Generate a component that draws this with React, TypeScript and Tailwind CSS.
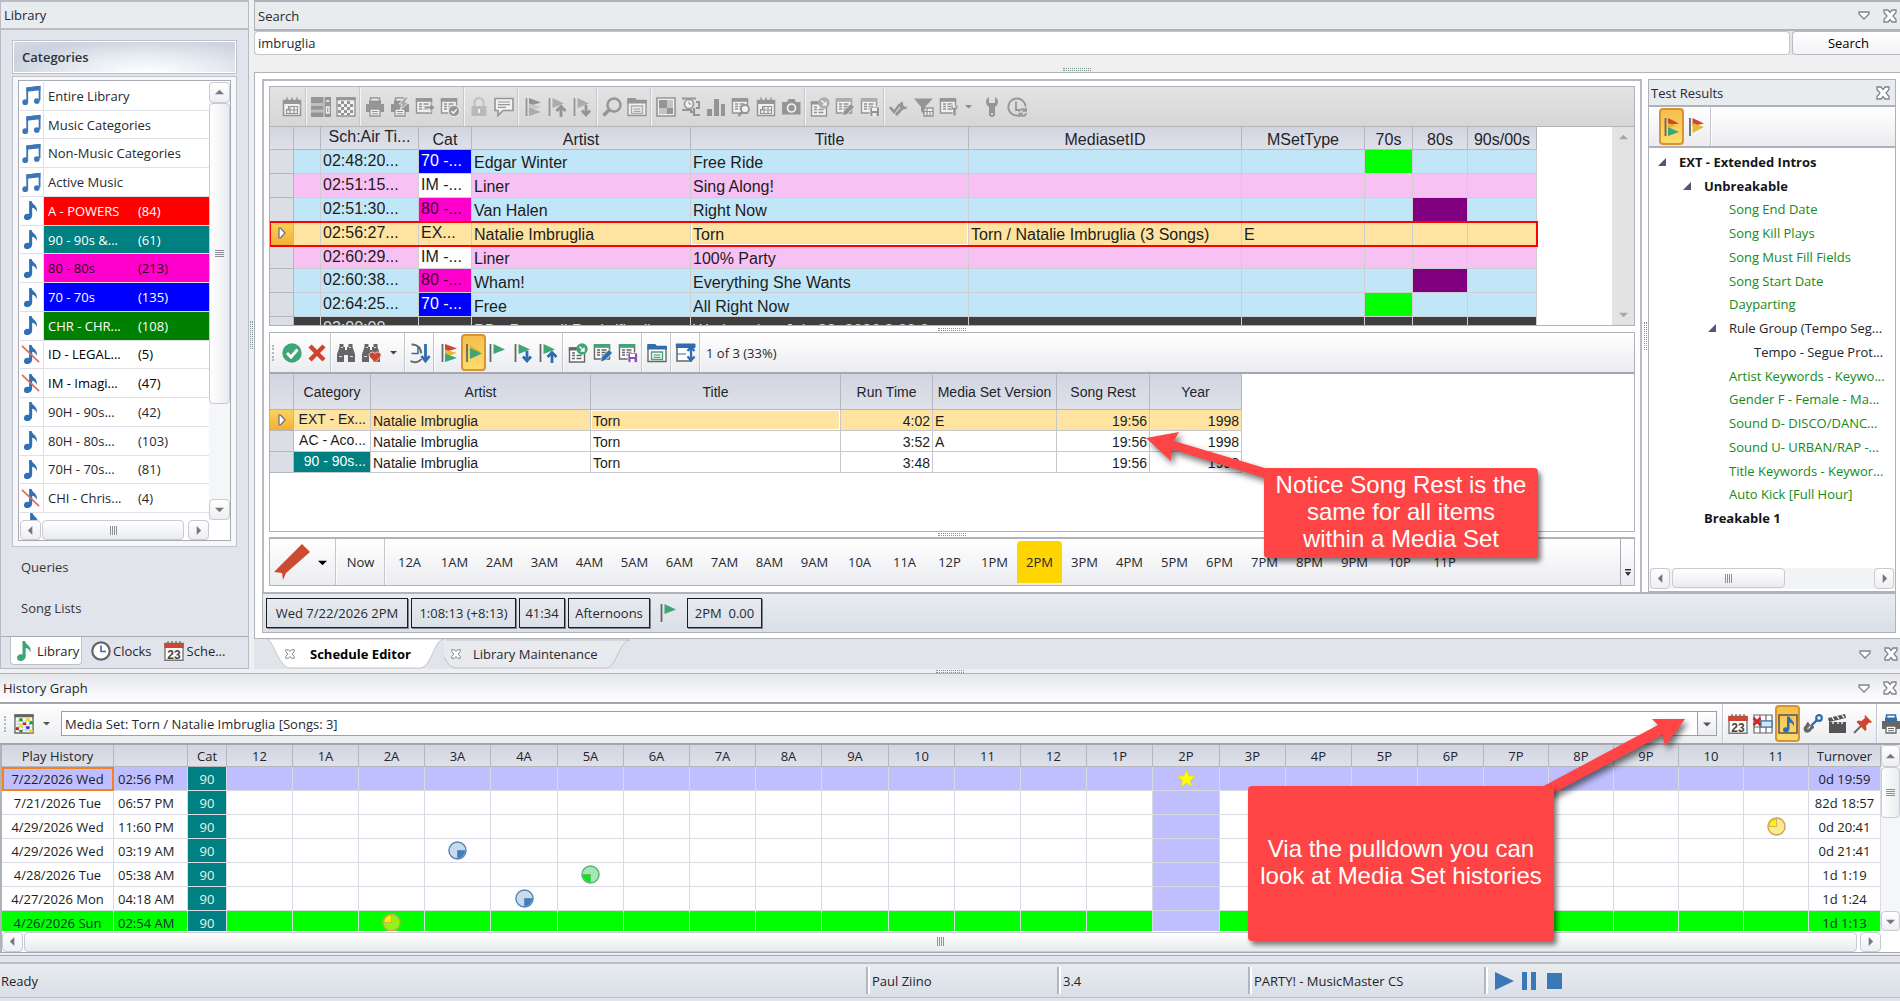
import React, { useState } from 'react';
import clsx from 'clsx';

const GRAY = '#666666';
const BLUE = '#2f6db0';
const GREEN = '#3fa577';
const RED = '#cf4530';
const YELLOW = '#e3b92f';

/* ---------- icons ---------- */

const TableBase = ({ head = GREEN }: { head?: string }) => (
  <>
    <path d="M1.5 2h15v14h-15z" fill="#fff" stroke={GRAY} strokeWidth="1.4" />
    <path d="M.8 1.2h16.4v3.6H.8z" fill={head} />
    <path d="M4 7h3M4 9.5h3M4 12h3M8.5 7h5M8.5 9.5h5M8.5 12h5" stroke={GRAY} strokeWidth="1.3" />
  </>
);

const FlagBase = () => (
  <>
    <path d="M1.5 1v18" stroke={GRAY} strokeWidth="1.8" />
    <path d="M4.5 1 16 6.5 4.5 11z" fill={GREEN} />
  </>
);

const PrinterBase = () => (
  <>
    <path d="M5.5 1h9v5h-9z" fill="#fff" stroke={BLUE} strokeWidth="1.5" />
    <path d="M4 3.5h12v4H4z" fill={BLUE} />
    <path d="M1 7h18v8H1z" fill={GRAY} />
    <path d="M5 12h10v7H5z" fill="#fff" stroke={GRAY} strokeWidth="1.3" />
    <path d="M7 14.5h6M7 16.7h6" stroke={GRAY} />
  </>
);

const Binoculars = () => (
  <>
    <path d="M3.500 1h4v3h1.500v3h2V4h1.500V1h4v3L19 11v8h-7v-7H8v7H1v-8l2.500-7z" fill={GRAY} />
    <path d="M3 13.500h3M14 13.500h3M5 4.500h2M13 4.500h2" stroke="#fff" strokeWidth=".8" />
  </>
);

const NOTE_PATH = 'M7.500 0h2.500c.8 4 7 5 5.500 11.500-.9-3-2.800-4.300-4.800-4.500V15c0 6-8.700 6.500-8.700 2 0-3.200 3-4.200 5.500-3.400z';

const ICONS: Record<string, React.ReactNode> = {
  calendar: (
    <>
      <path d="M1.5 3.5h17v15h-17z" fill="#fff" stroke={GRAY} strokeWidth="1.5" />
      <path d="M1 3h18v4H1z" fill={GRAY} />
      <path d="M5 .5v4M10 .5v4M15 .5v4" stroke={GRAY} strokeWidth="1.5" />
      <path d="M6.5 9.500h9v7h-11v-4h2zM4.500 13h11M8 9.500v7M12 9.500v7" fill="none" stroke={GRAY} strokeWidth="1.1" />
    </>
  ),
  layout: (
    <>
      <path d="M0 0h12.500v20H0zM13.500 0H20v20h-6.500z" fill={GRAY} />
      <path d="M0 6h12.500v3H0zM0 12.500h12.500v3H0z" fill="#aaa" />
      <path d="M15 4h3.500M15.500 10h2.500v6h-2.500z" stroke="#fff" fill="none" strokeWidth="1.4" />
    </>
  ),
  cells: (
    <>
      <path d="M1 1h18v18H1z" fill="#fff" stroke={GRAY} strokeWidth="1.4" />
      <path d="M.3 .3h19.4v3H.3z" fill={GRAY} />
      <path d="M5 4h3v3H5zM11 4h3v3h-3zM2 7h3v3H2zM8 7h3v3H8zM14 7h3v3h-3zM5 10h3v3H5zM11 10h3v3h-3zM2 13h3v3H2zM8 13h3v3H8zM14 13h3v3h-3zM5 16h3v2H5zM11 16h3v2h-3z" fill={GRAY} />
    </>
  ),
  colorCells: (
    <>
      <path d="M1 1h18v18H1z" fill="#fff" stroke={GRAY} strokeWidth="1.4" />
      <path d="M.3 .3h19.4v3H.3z" fill={GRAY} />
      <path d="M5 4v15M8.500 4v15M12 4v15M15.500 4v15M1 7h18M1 10h18M1 13h18M1 16h18" stroke="#b9bcc4" strokeWidth=".8" />
      <path d="M5.400 4.300h3v3h-3zM15.800 7.300h3v3h-3zM5.400 16h3v2.600h-3z" fill="#12a512" />
      <path d="M9 8.500h3v2.600H9zM1.800 13.300h3v2.600h-3z" fill="#d31818" />
      <path d="M12.300 12.300h3v2.600h-3z" fill="#2424d8" />
      <path d="M12.300 4.300h3v2.600h-3zM5.400 10.300h3v2.600h-3zM15.800 16h3v2.600h-3z" fill="#f0e010" />
    </>
  ),
  printer: <PrinterBase />,
  printerBolt: (
    <>
      <PrinterBase />
      <path d="M15 0 9 7h3l-2 6 9-8h-4l4-5z" fill="#888" stroke="#fff" strokeWidth=".8" />
    </>
  ),
  tableArrow: (
    <>
      <TableBase head={GRAY} />
      <path d="M9 9h6V5.500l5 5-5 5V12H9z" fill={GRAY} stroke="#fff" strokeWidth=".8" />
    </>
  ),
  tableCheck: (
    <>
      <TableBase head={GRAY} />
      <circle cx="14" cy="14" r="5.600" fill={GRAY} stroke="#fff" />
      <path d="m11.300 14 2 2.200 3.500-4" stroke="#fff" strokeWidth="1.600" fill="none" />
    </>
  ),
  lock: (
    <>
      <path d="M5.500 9V5.500a4.500 4.500 0 0 1 9 0V9" fill="none" stroke="#aaa" strokeWidth="2" />
      <path d="M2.500 9h15v10h-15z" fill="#a4a4a4" />
      <path d="M10 12v4" stroke="#fff" strokeWidth="2" />
    </>
  ),
  comment: (
    <>
      <path d="M1 1.500h18v12H9l-5 5v-5H1z" fill="#fff" stroke={GRAY} strokeWidth="1.600" />
      <path d="M4 5h12M4 7.700h12M4 10.400h8" stroke={GRAY} strokeWidth="1.200" />
    </>
  ),
  flags: (
    <>
      <path d="M3.500 1v18" stroke={GRAY} strokeWidth="1.800" />
      <path d="M6 1 18 5.500 6 9z" fill={RED} />
      <path d="M6 6.500 18 10 6 14z" fill={YELLOW} />
      <path d="M6 10.500 18 15 6 19z" fill={GREEN} />
    </>
  ),
  flagsTwo: (
    <>
      <path d="M3.500 1v18" stroke={GRAY} strokeWidth="1.800" />
      <path d="M6 1 17 6.500 6 8z" fill={RED} />
      <path d="M6 6 14 9 6 11z" fill={YELLOW} />
      <path d="M6 10 17 15 6 19z" fill={GREEN} />
    </>
  ),
  flagsWarn: (
    <>
      <path d="M3 1v18" stroke={GRAY} strokeWidth="1.800" />
      <path d="M5.500 1 17 6.500 5.500 9z" fill={RED} />
      <path d="M5.500 6 17 10 5.500 16z" fill={YELLOW} />
    </>
  ),
  flagCurrent: (
    <>
      <path d="M3 1v18" stroke={GRAY} strokeWidth="1.800" />
      <path d="M6 2 17 9 6 9z" fill="#dcb531" />
      <path d="M6 5 18 10.500 6 16z" fill={GREEN} />
    </>
  ),
  flag: <FlagBase />,
  flagDown: (
    <>
      <FlagBase />
      <path d="M9 13.500 13 18l4-4.500M13 8v9.500" stroke={BLUE} strokeWidth="2.800" fill="none" />
    </>
  ),
  flagUp: (
    <>
      <FlagBase />
      <path d="M8.500 14 13 9.500l4.500 4.500M13 10v10" stroke={BLUE} strokeWidth="2.800" fill="none" />
    </>
  ),
  search: (
    <>
      <circle cx="12" cy="8" r="6.500" fill="none" stroke={GRAY} strokeWidth="2.400" />
      <path d="m7.500 12.500-6 6" stroke={GRAY} strokeWidth="3.400" />
    </>
  ),
  folder: (
    <>
      <path d="M1 3.500h18v15H1z" fill="#fff" stroke={GRAY} strokeWidth="1.400" />
      <path d="M.3 1h8l1.500 2h10v3.500H.3z" fill={BLUE} />
      <path d="M4.500 9h11v7.500h-11z" fill="#fff" stroke={GREEN} strokeWidth="1.400" />
      <path d="M6.500 12h7M6.500 14.300h7" stroke={GRAY} />
    </>
  ),
  quad: (
    <>
      <path d="M1 1h18v18H1z" fill="#fff" stroke={GRAY} strokeWidth="1.600" />
      <path d="M3 3h8v8H3z" fill={GRAY} />
      <path d="M11 3h6v8h-6zM3 11h8v6H3z" fill="#b5b5b5" />
      <path d="M11 11h6v6h-6z" fill={GRAY} />
    </>
  ),
  clockTree: (
    <>
      <path d="M1 1.500h14M1 13h10M15 5h3v6h-3" stroke={GRAY} strokeWidth="2" fill="none" />
      <circle cx="8" cy="7" r="4.500" fill="#fff" stroke={GRAY} strokeWidth="1.600" />
      <path d="M8 4.500V7h2.500" stroke={GRAY} fill="none" />
      <path d="M13 11v7h6M9 15h4" stroke={GRAY} strokeWidth="2.200" fill="none" />
    </>
  ),
  bars: <path d="M1 12h5v7H1zM8 2h5v17H8zM15 7h4v12h-4z" fill={GRAY} />,
  tableSearch: (
    <>
      <TableBase head={GRAY} />
      <circle cx="14" cy="12" r="4" fill="#fff" stroke={GRAY} strokeWidth="1.800" />
      <path d="m11 15-3.500 4" stroke={GRAY} strokeWidth="2.400" />
    </>
  ),
  camera: (
    <>
      <path d="M1 5h5l1.500-3h6L15 5h4.500v12.500H1z" fill={GRAY} />
      <circle cx="10.500" cy="11" r="4" fill={GRAY} stroke="#fff" strokeWidth="1.700" />
    </>
  ),
  tableDisc: (
    <>
      <path d="M1.500 5h15v14h-15z" fill="#fff" stroke={GRAY} strokeWidth="1.400" />
      <path d="M.8 4.500h8v3h-8z" fill={GRAY} />
      <path d="M4 10h3M4 12.500h3M4 15.500h3M8.500 12.500h5M8.500 15.500h5" stroke={GRAY} strokeWidth="1.300" />
      <circle cx="14" cy="6" r="5.700" fill={GREEN} />
      <path d="m11.500 3.500 4 4M16 4.500v3.500h-3.500" stroke="#fff" strokeWidth="1.400" fill="none" />
    </>
  ),
  tableEdit: (
    <>
      <TableBase />
      <path d="m7.500 19 1-5L16 6.500l3.500 3.500-7.500 7.500z" fill={BLUE} stroke="#fff" strokeWidth=".7" />
    </>
  ),
  tableSave: (
    <>
      <TableBase />
      <path d="M10 10h9.500v9.500H10z" fill="#8a50b5" stroke="#fff" strokeWidth=".7" />
      <path d="M12 11h5v3h-5zM12.500 16h4v3h-4z" fill="#fff" />
    </>
  ),
  checks: (
    <>
      <path d="m1 10 4 5 6-8" stroke={GRAY} strokeWidth="2.600" fill="none" />
      <path d="m7 18 8-9" stroke={GRAY} strokeWidth="3" />
      <path d="M14 4.500a4 4 0 1 0 4.500 5l-3 .5-1.500-2z" fill={GRAY} />
    </>
  ),
  filterTable: (
    <>
      <path d="M0 1.500h19L11 10v8L7 14v-4z" fill={GRAY} />
      <path d="M10 11h9v8h-9z" fill="#fff" stroke={GRAY} strokeWidth="1.400" />
      <path d="M10 14.500h9M13 11v8M16 14v5" stroke={GRAY} strokeWidth="1.200" />
    </>
  ),
  tableWrench: (
    <>
      <TableBase head={GRAY} />
      <path d="M12 7v4l2 2v6h3v-6l2-2V7l-2 1.500v2h-3v-2z" fill={GRAY} stroke="#fff" strokeWidth=".6" />
    </>
  ),
  wrench: (
    <>
      <path d="M7 0C3 2 3 8 7 10v8c0 2.500 6 2.500 6 0v-8c4-2 4-8 0-10v6H7z" fill={GRAY} />
      <circle cx="10" cy="17" r="1" fill="#fff" />
    </>
  ),
  clockRefresh: (
    <>
      <path d="M18.500 9.500a8.600 8.600 0 1 0-7 9" fill="none" stroke={GRAY} strokeWidth="1.900" />
      <path d="M9 4.500V13h3" stroke={GRAY} strokeWidth="1.800" fill="none" />
      <path d="M12 14.500c1-3 5-3 6.500-1M19 10.500V14h-3.500M19.500 16c-1 3.500-5 3.500-6.500 1.500M12.500 20v-3.500H16" stroke={GRAY} strokeWidth="1.700" fill="none" />
    </>
  ),
  ok: (
    <>
      <circle cx="10" cy="10" r="9.700" fill={GREEN} />
      <path d="m5 10 4 4 6.500-7.500" stroke="#fff" strokeWidth="3" fill="none" />
    </>
  ),
  cancel: <path d="m3 3 14 14M17 3 3 17" stroke={RED} strokeWidth="4.400" />,
  binoculars: <Binoculars />,
  binocularsHeart: (
    <>
      <Binoculars />
      <path d="M14 19.500 8.500 14a3 3 0 0 1 5.500-3.500A3 3 0 0 1 19.500 14z" fill={RED} stroke="#fff" strokeWidth=".7" />
    </>
  ),
  clockDown: (
    <>
      <path d="M1.500 1.500a8.500 8.500 0 0 1 9.500 9M.5 18a8.500 8.500 0 0 0 11-2" fill="none" stroke={GRAY} strokeWidth="1.900" />
      <path d="M8 4v6.500H1.500" stroke={BLUE} strokeWidth="1.500" fill="none" />
      <path d="M15.500 1v16M11.500 13l4 5 4-5" stroke={BLUE} strokeWidth="2.800" fill="none" />
    </>
  ),
  split: (
    <>
      <path d="M1 2h14v16H1z" fill="#fff" stroke={GRAY} strokeWidth="1.500" />
      <path d="M.3 1H19v3.500H.3zM1 11h9" fill={BLUE} stroke={BLUE} />
      <path d="M15 4v13M11.500 8 15 4l3.500 4M11.500 13.500l3.500 4 3.500-4" stroke={BLUE} strokeWidth="2.300" fill="none" />
    </>
  ),
  gridX: (
    <>
      <path d="M1 1h18v18H1zM7 1v18M13 1v18M1 7h18M1 13h18" fill="#fff" stroke={GRAY} strokeWidth="1.200" />
      <path d="M8 7h11v6H8z" fill="#cfe5f8" stroke={BLUE} strokeWidth="1.200" />
      <path d="m.5 4 7 7M7.500 4l-7 7" stroke="#d1232a" strokeWidth="2.600" />
    </>
  ),
  noteBox: (
    <>
      <path d="M1 1h18v18H1z" fill="none" stroke="#555" strokeWidth="1.500" />
      <path d="M9 2.500h2.500c.5 3 5.500 4 4.500 10-1-3-3-4-4.500-4v6c0 5-6.500 5-6.500 1.500 0-2.500 2-3 4-2.500z" fill={BLUE} />
    </>
  ),
  guitar: (
    <>
      <path d="m8 12 7-7" stroke={BLUE} strokeWidth="2.400" />
      <circle cx="16" cy="4" r="2.800" fill="#fff" stroke={BLUE} strokeWidth="2.200" />
      <path d="M5 8c1.500 1 1 2 2 3s4 0 4 2-2 1.500-2.500 3S4 20 2 18s-1.500-5 0-6 1.500-4 3-4z" fill={GRAY} />
      <path d="m4.500 15 3-3" stroke="#ccc" strokeWidth="1.500" />
    </>
  ),
  clapper: (
    <>
      <path d="M1 8h17v11H1z" fill="#555" />
      <path d="m0 4 17-4 1 4-17 4z" fill="#555" />
      <path d="m4 3 2 3M9 2l2 3M14 1l2 3M5 8v2M10 8v2M14 8v2" stroke="#fff" strokeWidth="1.300" />
    </>
  ),
  pin: (
    <>
      <path d="m8 12-7 7" stroke={GRAY} strokeWidth="1.800" />
      <path d="m12 1 7 7-1.500 1-1.500-.5-3 3.500.5 3.500L12 17 3.500 8l1.500-1.500 3.500.5 3.500-3-.5-1.500z" fill={RED} />
    </>
  ),
  date: (
    <>
      <path d="M1 2.500h18v16.700H1z" fill="#fff" stroke="#777" strokeWidth="1.400" />
      <path d="M.3 2h19.400v5H.3z" fill={RED} />
      <path d="M4 0v3M8 0v3M12 0v3M16 0v3" stroke={GRAY} strokeWidth="1.200" />
      <text x="10" y="17.500" textAnchor="middle" fontSize="12" fontWeight="bold" fill="#444" fontFamily="Liberation Sans, sans-serif">23</text>
    </>
  ),
  note: <path d={NOTE_PATH} fill="#2e70b5" />,
  noteGreen: <path d={NOTE_PATH} fill={GREEN} />,
  noteOff: (
    <>
      <path d={NOTE_PATH} fill="#2e70b5" />
      <path d="m0 1 18 17" stroke="#dd6a58" strokeWidth="1.700" />
    </>
  ),
  notes: (
    <>
      <path d="M5.500 17V2.500L18.500.8V15" fill="none" stroke="#3a76b8" strokeWidth="1.900" />
      <path d="M4.600 1.500 19.400 0v4.500L4.600 6z" fill="#3a76b8" />
      <circle cx="3.400" cy="17" r="3" fill="#3a76b8" />
      <circle cx="15.600" cy="15.800" r="3" fill="#3a76b8" />
    </>
  ),
  clock: (
    <>
      <circle cx="10" cy="10" r="8.700" fill="#fff" stroke={GRAY} strokeWidth="2.200" />
      <path d="M10 4.500V10.500h5" stroke={BLUE} strokeWidth="1.600" fill="none" />
    </>
  ),
};

const Icon = ({ name, className = 'size-5' }: { name: string; className?: string }) => (
  <svg viewBox="0 0 20 20" className={clsx('shrink-0 overflow-visible', className)} aria-hidden="true">
    {ICONS[name]}
  </svg>
);

type Dir = 'up' | 'down' | 'left' | 'right';
const ARROWS: Record<Dir, string> = {
  up: 'M0 7 5 2l5 5z',
  down: 'M0 3h10L5 8z',
  left: 'M7 0v10L2 5z',
  right: 'M3 0v10l5-5z',
};

const Arrow = ({ dir, className = 'size-[9px] text-[#77777f]' }: { dir: Dir; className?: string }) => (
  <svg viewBox="0 0 10 10" className={className} aria-hidden="true">
    <path d={ARROWS[dir]} fill="currentColor" />
  </svg>
);

const CloseGlyph = ({ className = 'size-[14px]' }: { className?: string }) => (
  <svg viewBox="0 0 14 14" className={className} aria-hidden="true">
    <path d="M1 1h4l2 2.500L9 1h4v2.500L10 7l3 3.500V13H9l-2-2.500L5 13H1v-2.500L4 7 1 3.500z" fill="#fff" stroke="#80828c" strokeWidth="1.300" />
  </svg>
);

const MenuGlyph = () => (
  <svg viewBox="0 0 12 9" className="h-[9px] w-3" aria-hidden="true">
    <path d="M1 1h10v2L6 8 1 3z" fill="#fff" stroke="#80828c" strokeWidth="1.300" />
  </svg>
);

/* ---------- shared chrome ---------- */

const WindowButtons = ({ menu = true }: { menu?: boolean }) => (
  <div className="flex items-center gap-[13px]">
    {menu && <button aria-label="Window menu"><MenuGlyph /></button>}
    <button aria-label="Close"><CloseGlyph /></button>
  </div>
);

const ScrollButton = ({ dir, className = 'size-5' }: { dir: Dir; className?: string }) => (
  <button aria-label={`Scroll ${dir}`} className={clsx('flex shrink-0 items-center justify-center rounded-sm border border-[#c9cad2] bg-gradient-to-b from-white to-[#eeeff3]', className)}>
    <Arrow dir={dir} />
  </button>
);

const HThumb = ({ className }: { className: string }) => (
  <div className={clsx('flex h-5 items-center justify-center gap-px rounded-sm border border-[#c9cad2] bg-gradient-to-b from-white to-[#e9ebee]', className)}>
    {[0, 1, 2, 3].map(i => <i key={i} className="h-[9px] w-px bg-[#8f8f98]" />)}
  </div>
);

const VThumb = ({ className }: { className: string }) => (
  <div className={clsx('flex flex-col items-center justify-center gap-px rounded-sm border border-[#c9cad2] bg-gradient-to-r from-white to-[#e9ebee]', className)}>
    {[0, 1, 2, 3].map(i => <i key={i} className="h-px w-[9px] bg-[#8f8f98]" />)}
  </div>
);

const HGrip = () => <div className="h-[3px] w-7 border-y border-dotted border-[#7f978f]" />;
const VGrip = () => <div className="h-7 w-[3px] border-x border-dotted border-[#7f978f]" />;

const Sep = () => (
  <div className="flex w-1 shrink-0 justify-center self-stretch">
    <div className="w-px bg-[#c6c7cc]" />
    <div className="w-px bg-white/70" />
  </div>
);

const ToolButton = ({ icon, active, muted }: { icon: string; active?: boolean; muted?: boolean }) => (
  <button
    aria-label={icon}
    className={clsx(
      'flex h-[37px] w-[25px] shrink-0 items-center justify-center',
      active && 'rounded-sm border-2 border-[#d9942f] bg-gradient-to-b from-[#f5bf4b] to-[#fddc6c]',
    )}
  >
    <Icon name={icon} className={clsx('size-5', muted && 'opacity-60 grayscale')} />
  </button>
);

/* ---------- library ---------- */

const LIBRARY = [
  { label: 'Entire Library', icon: 'notes' },
  { label: 'Music Categories', icon: 'notes' },
  { label: 'Non-Music Categories', icon: 'notes' },
  { label: 'Active Music', icon: 'notes' },
  { label: 'A - POWERS', count: 84, icon: 'note', tone: 'bg-[#ff0000] text-white' },
  { label: '90 - 90s &...', count: 61, icon: 'note', tone: 'bg-[#008080] text-white' },
  { label: '80 - 80s', count: 213, icon: 'note', tone: 'bg-[#ff00cc] text-[#2a0022]' },
  { label: '70 - 70s', count: 135, icon: 'note', tone: 'bg-[#0000ff] text-white' },
  { label: 'CHR - CHR...', count: 108, icon: 'note', tone: 'bg-[#008000] text-white' },
  { label: 'ID - LEGAL...', count: 5, icon: 'noteOff', tone: 'text-black' },
  { label: 'IM - Imagi...', count: 47, icon: 'noteOff', tone: 'text-black' },
  { label: '90H - 90s...', count: 42, icon: 'note' },
  { label: '80H - 80s...', count: 103, icon: 'note' },
  { label: '70H - 70s...', count: 81, icon: 'note' },
  { label: 'CHI - Chris...', count: 4, icon: 'noteOff' },
];

const LibraryPanel = () => (
  <aside className="flex w-[249px] shrink-0 flex-col border border-t-2 border-[#b9bac4]">
    <h2 className="flex h-7 items-center border-b-2 border-[#bcbdc5] bg-[#e8ecee] px-[3px]">Library</h2>
    <div className="flex flex-1 flex-col px-[11px] pt-[10px]">
      <button className="flex h-[34px] items-center border border-[#bfc1ca] bg-[radial-gradient(ellipse_at_60%_100%,#ffffff_0%,#e6ebf1_40%,#ccd3de_75%,#d5dae3_100%)] px-[9px] font-semibold text-[#2d323c] ring-1 ring-white ring-inset">
        Categories
      </button>
      <div className="mt-0.5 border border-[#bfc1ca] bg-[#f6f7f9] px-[5px] pt-[3px] pb-[5px]">
        <div className="border border-[#a9aab3] bg-white pt-px pl-px">
          <div className="flex">
            <div className="h-[438px] min-w-0 flex-1 overflow-hidden">
              <ul className="flex h-[431px] flex-col">
                {LIBRARY.map(row => (
                  <li key={row.label} className="flex flex-1 border-b border-[#dedfe7]">
                    <span className="flex w-6 items-center justify-center border-r border-[#dedfe7]">
                      <Icon name={row.icon} className="size-[19px]" />
                    </span>
                    <button className={clsx('flex min-w-0 flex-1 items-center pl-1 text-left', row.tone)}>
                      <span className={clsx('whitespace-nowrap', row.count && 'w-[90px]')}>{row.label}</span>
                      {row.count && <span>({row.count})</span>}
                    </button>
                  </li>
                ))}
              </ul>
              <Icon name="note" className="ml-[3px] size-[19px]" />
            </div>
            <div className="flex w-[21px] flex-col bg-[#f5f6f8]">
              <ScrollButton dir="up" className="h-[21px] w-[21px]" />
              <VThumb className="h-[301px] w-[21px]" />
              <ScrollButton dir="down" className="mt-auto h-[21px] w-[21px]" />
            </div>
          </div>
          <div className="flex pr-[21px]">
            <ScrollButton dir="left" className="h-5 w-[21px]" />
            <HThumb className="mx-px mr-1 flex-1" />
            <ScrollButton dir="right" className="h-5 w-[21px]" />
          </div>
        </div>
      </div>
      <button className="mt-[10px] flex h-[20px] items-center px-[9px] text-[#33363d]">Queries</button>
      <button className="mt-[21px] flex h-[20px] items-center px-[9px] text-[#33363d]">Song Lists</button>
    </div>
    <nav className="flex h-8 items-start border-t border-[#a9aab3] pl-[9px]">
      <button className="flex h-7 w-[72px] items-center gap-0.5 rounded-b border border-t-0 border-[#bfc1ca] bg-white pl-1">
        <Icon name="noteGreen" className="size-5" />Library
      </button>
      <button className="ml-[9px] flex h-7 items-center gap-0.5"><Icon name="clock" />Clocks</button>
      <button className="ml-3 flex h-7 items-center gap-[3px]"><Icon name="date" />Sche...</button>
    </nav>
  </aside>
);

/* ---------- schedule editor ---------- */

const TOP_TOOLS = [
  ['calendar'],
  ['layout', 'cells'],
  ['printer', 'printerBolt', 'tableArrow', 'tableCheck'],
  ['lock', 'comment'],
  ['flags', 'flagUp', 'flagDown'],
  ['search', 'folder'],
  ['quad', 'clockTree', 'bars', 'tableSearch', 'calendar', 'camera'],
  ['tableDisc', 'tableEdit', 'tableSave'],
  ['checks', 'filterTable', 'tableWrench'],
];

const SCHEDULE_COLS = [
  { label: '', w: 'w-6' },
  { label: '', w: 'w-[27px]' },
  { label: 'Sch:Air Ti...', w: 'w-[98px]', top: true },
  { label: 'Cat', w: 'w-[53px]' },
  { label: 'Artist', w: 'w-[219px]' },
  { label: 'Title', w: 'w-[278px]' },
  { label: 'MediasetID', w: 'w-[273px]' },
  { label: 'MSetType', w: 'w-[123px]' },
  { label: '70s', w: 'w-12' },
  { label: '80s', w: 'w-[55px]' },
  { label: '90s/00s', w: 'w-[69px]' },
];

const CAT_TONE: Record<string, string> = {
  '70 -...': 'bg-[#0000ff] text-white',
  '80 -...': 'bg-[#ff00cc] text-[#3a0030]',
  'IM -...': 'bg-white',
};

const SONG = 'bg-[#c1e6f8]';
const LINER = 'bg-[#f8c1f3]';

const SCHEDULE = [
  { time: '02:48:20...', cat: '70 -...', artist: 'Edgar Winter', title: 'Free Ride', tone: SONG, era: 70 },
  { time: '02:51:15...', cat: 'IM -...', artist: 'Liner', title: 'Sing Along!', tone: LINER },
  { time: '02:51:30...', cat: '80 -...', artist: 'Van Halen', title: 'Right Now', tone: SONG, era: 80 },
  { time: '02:56:27...', cat: 'EX...', artist: 'Natalie Imbruglia', title: 'Torn', mediaset: 'Torn / Natalie Imbruglia (3 Songs)', mset: 'E', tone: 'bg-[#ffe3a0]', current: true },
  { time: '02:60:29...', cat: 'IM -...', artist: 'Liner', title: '100% Party', tone: LINER },
  { time: '02:60:38...', cat: '80 -...', artist: 'Wham!', title: 'Everything She Wants', tone: SONG, era: 80 },
  { time: '02:64:25...', cat: '70 -...', artist: 'Free', title: 'All Right Now', tone: SONG, era: 70 },
  { time: '03:00:00', cat: '', artist: 'PB - Party all Rock (final)', title: 'Wednesday, July 22, 2026 3:00:0', tone: 'bg-[#3f3f3f] text-[#d8d8d8]', era: 0 },
];

const HEAD = 'border-r border-b border-[#b4b6c0] bg-gradient-to-b from-[#d1d5e0] to-[#dfe1e9] p-0 font-normal text-[#22242a]';
const RowMark = () => (
  <svg viewBox="0 0 8 12" className="mx-auto h-3 w-2" aria-hidden="true">
    <path d="M1 1h1.500L7 6l-4.500 5H1z" fill="#fff" stroke="#6b6a84" strokeWidth="1.200" />
  </svg>
);

const ScheduleGrid = () => (
  <div className="flex h-[198px] bg-white">
    <div className="min-w-0 flex-1 overflow-hidden">
      <table className="h-[214px] w-[1267px] table-fixed border-separate border-spacing-0 font-['Liberation_Sans',sans-serif] text-base leading-[18px] text-[#1c1c1c]">
        <thead>
          <tr>
            {SCHEDULE_COLS.map((c, i) => (
              <th key={i} className={clsx(HEAD, c.w, c.top ? 'pt-px align-top' : 'pt-1', 'whitespace-nowrap')}>{c.label}</th>
            ))}
          </tr>
        </thead>
        <tbody>
          {SCHEDULE.map((r, i) => {
            const cell = 'border-r border-b border-[#cdcdd2] pt-1 pr-0 pb-0 pl-[2px] whitespace-nowrap overflow-hidden';
            const topCell = 'border-r border-b border-[#cdcdd2] pt-[2px] pr-0 pb-0 pl-[2px] whitespace-nowrap overflow-hidden align-top';
            return (
              <tr key={i} className={clsx(r.tone, r.current && 'outline-2 -outline-offset-1 outline-[#ff0000] outline-solid')}>
                <td className={clsx('border-r border-b border-[#b4b6c0] p-0', r.current ? 'bg-gradient-to-b from-[#fcd25a] to-[#f2b035]' : 'bg-[#dcdee6]')}>
                  {r.current && <RowMark />}
                </td>
                <td className={cell} />
                <td className={topCell}>{r.time}</td>
                <td className={clsx(topCell, CAT_TONE[r.cat])}>{r.cat}</td>
                <td className={cell}>{r.artist}</td>
                <td className={clsx(cell, r.current && 'shadow-[inset_0_0_0_1px_white]')}>{r.title}</td>
                <td className={cell}>{r.mediaset}</td>
                <td className={cell}>{r.mset}</td>
                <td className={clsx(cell, r.era === 70 && 'bg-[#00ff00]')} />
                <td className={clsx(cell, r.era === 80 && 'bg-[#800080]')} />
                <td className={cell} />
              </tr>
            );
          })}
        </tbody>
      </table>
    </div>
    <div className="flex w-[22px] flex-col items-center justify-between bg-[#e3e3e3] py-[6px]">
      <button aria-label="Scroll up"><Arrow dir="up" className="size-[9px] text-[#a6a6a6]" /></button>
      <button aria-label="Scroll down"><Arrow dir="down" className="size-[9px] text-[#a6a6a6]" /></button>
    </div>
  </div>
);

const MEDIA_COLS = [
  { label: '', w: 'w-6' },
  { label: 'Category', w: 'w-[77px]' },
  { label: 'Artist', w: 'w-[220px]' },
  { label: 'Title', w: 'w-[250px]' },
  { label: 'Run Time', w: 'w-[92px]' },
  { label: 'Media Set Version', w: 'w-[124px]' },
  { label: 'Song Rest', w: 'w-[93px]' },
  { label: 'Year', w: 'w-[92px]' },
];

const MEDIA = [
  { cat: 'EXT - Ex...', run: '4:02', version: 'E', tone: 'bg-[#ffe3a0]', current: true },
  { cat: 'AC - Aco...', run: '3:52', version: 'A' },
  { cat: '90 - 90s...', run: '3:48', version: '', catTone: 'bg-[#008080] text-white' },
];

const MediaGrid = () => (
  <div className="h-[157px] overflow-hidden bg-white">
    <table className="w-[972px] table-fixed border-separate border-spacing-0 font-['Liberation_Sans',sans-serif] text-sm leading-4 text-[#1c1c1c]">
      <thead>
        <tr className="h-9">
          {MEDIA_COLS.map((c, i) => <th key={i} className={clsx(HEAD, c.w, 'whitespace-nowrap')}>{c.label}</th>)}
        </tr>
      </thead>
      <tbody>
        {MEDIA.map(r => {
          const cell = 'border-r border-b border-[#c6c6cb] px-[2px] pt-[2px] pb-0 whitespace-nowrap';
          return (
            <tr key={r.cat} className={clsx('h-[21px]', r.tone)}>
              <td className={clsx('border-r border-b border-[#b4b6c0] p-0', r.current ? 'bg-gradient-to-b from-[#fcd25a] to-[#f2b035]' : 'bg-[#dcdee6]')}>
                {r.current && <RowMark />}
              </td>
              <td className={clsx('border-r border-b border-[#c6c6cb] px-1 pt-px pb-0 text-right align-top whitespace-nowrap', r.catTone)}>{r.cat}</td>
              <td className={cell}>Natalie Imbruglia</td>
              <td className={clsx(cell, r.current && 'shadow-[inset_0_0_0_1px_white]')}>Torn</td>
              <td className={clsx(cell, 'text-right')}>{r.run}</td>
              <td className={cell}>{r.version}</td>
              <td className={clsx(cell, 'text-right')}>19:56</td>
              <td className={clsx(cell, 'text-right')}>1998</td>
            </tr>
          );
        })}
      </tbody>
    </table>
  </div>
);

const HOURS = ['12A', '1AM', '2AM', '3AM', '4AM', '5AM', '6AM', '7AM', '8AM', '9AM', '10A', '11A', '12P', '1PM', '2PM', '3PM', '4PM', '5PM', '6PM', '7PM', '8PM', '9PM', '10P', '11P'];

const HourBar = () => {
  const [hour, setHour] = useState('2PM');
  return (
    <div className="flex h-[49px] border border-t-2 border-[#b0b1ba] bg-gradient-to-b from-white to-[#ebecf0]">
      <button aria-label="Bookmark" className="flex w-[64px] items-center gap-2 pl-1">
        <svg viewBox="0 0 36 36" className="size-9" aria-hidden="true">
          <path d="M28 0 36 8 12 29l-3 7-1-7-8-1z" fill="#cb4a31" />
        </svg>
        <Arrow dir="down" className="size-[9px] text-black" />
      </button>
      <Sep />
      <button className="w-[45px] text-center">Now</button>
      <Sep />
      <div className="flex min-w-0 flex-1">
        {HOURS.map(h => (
          <button key={h} onClick={() => setHour(h)} className={clsx('w-[45px] shrink-0 text-center', h === hour && 'my-0.5 rounded-t bg-[#ffd500]')}>
            {h}
          </button>
        ))}
      </div>
      <button aria-label="More" className="flex w-[14px] items-end justify-center border-l border-[#a9aab3] pb-2">
        <svg viewBox="0 0 8 8" className="size-2" aria-hidden="true">
          <path d="M1 0h6v1.500H1zM1 3h6L4 7z" fill="#33343c" />
        </svg>
      </button>
    </div>
  );
};

const MediaTools = () => (
  <div className="flex h-[39px] items-center bg-gradient-to-b from-white to-[#ebecf0] pl-[2px]">
    <div className="mr-1 h-4 w-[3px] border-l-2 border-dotted border-[#b4b6bf]" />
    <ToolButton icon="ok" />
    <ToolButton icon="cancel" />
    <Sep />
    <ToolButton icon="binoculars" />
    <ToolButton icon="binocularsHeart" />
    <button aria-label="Find options" className="flex w-5 justify-center"><Arrow dir="down" className="size-[7px] text-[#444]" /></button>
    <Sep />
    <ToolButton icon="clockDown" />
    <Sep />
    <ToolButton icon="flags" />
    <ToolButton icon="flagCurrent" active />
    <ToolButton icon="flag" />
    <ToolButton icon="flagDown" />
    <ToolButton icon="flagUp" />
    <Sep />
    <ToolButton icon="tableDisc" />
    <ToolButton icon="tableEdit" />
    <ToolButton icon="tableSave" />
    <Sep />
    <ToolButton icon="folder" />
    <Sep />
    <ToolButton icon="split" />
    <Sep />
    <span className="pl-1">1 of 3 (33%)</span>
  </div>
);

const ScheduleTools = () => (
  <div className="flex h-10 items-center border-b border-[#b4b4b4] bg-gradient-to-b from-[#e3e3e3] to-[#d6d6d6] pl-[9px]">
    {TOP_TOOLS.map((group, g) => (
      <React.Fragment key={g}>
        {g > 0 && <Sep />}
        {group.map((name, i) => <ToolButton key={i} icon={name} muted />)}
      </React.Fragment>
    ))}
    <button aria-label="Table options" className="flex w-[14px] justify-center"><Arrow dir="down" className="size-[7px] text-[#8a8a8a]" /></button>
    <div className="ml-1 flex">
      <ToolButton icon="wrench" muted />
      <ToolButton icon="clockRefresh" muted />
    </div>
  </div>
);

/* ---------- test results ---------- */

const TREE = [
  { label: 'EXT - Extended Intros', pad: 'pl-[9px]', open: true, tone: 'font-bold text-[#15151a]' },
  { label: 'Unbreakable', pad: 'pl-[34px]', open: true, tone: 'font-bold text-[#15151a]' },
  { label: 'Song End Date', pad: 'pl-[59px]' },
  { label: 'Song Kill Plays', pad: 'pl-[59px]' },
  { label: 'Song Must Fill Fields', pad: 'pl-[59px]' },
  { label: 'Song Start Date', pad: 'pl-[59px]' },
  { label: 'Dayparting', pad: 'pl-[59px]' },
  { label: 'Rule Group (Tempo Seg...', pad: 'pl-[59px]', open: true, tone: 'text-[#22242a]' },
  { label: 'Tempo - Segue Prot...', pad: 'pl-[84px]', tone: 'text-[#22242a]' },
  { label: 'Artist Keywords - Keywo...', pad: 'pl-[59px]' },
  { label: 'Gender F - Female - Ma...', pad: 'pl-[59px]' },
  { label: 'Sound D- DISCO/DANC...', pad: 'pl-[59px]' },
  { label: 'Sound U- URBAN/RAP -...', pad: 'pl-[59px]' },
  { label: 'Title Keywords - Keywor...', pad: 'pl-[59px]' },
  { label: 'Auto Kick [Full Hour]', pad: 'pl-[59px]' },
  { label: 'Breakable 1', pad: 'pl-[34px]', tone: 'font-bold text-[#15151a]' },
];

const TestResults = () => (
  <aside className="flex w-[248px] shrink-0 flex-col border border-[#b0b1ba] bg-white">
    <div className="flex h-[27px] items-center justify-between border-b-2 border-[#b0b1ba] bg-[#e8ecee] pr-[5px] pl-[2px]">
      <h2>Test Results</h2>
      <WindowButtons menu={false} />
    </div>
    <div className="flex h-[41px] items-center border-b-2 border-[#b0b1ba] bg-gradient-to-b from-white to-[#ebecf0] pl-[10px]">
      <ToolButton icon="flagsTwo" active />
      <ToolButton icon="flagsWarn" />
      <Sep />
    </div>
    <ul className="mt-[2px] flex h-[380px] flex-col">
      {TREE.map(n => (
        <li key={n.label} className={clsx('flex flex-1 items-center whitespace-nowrap', n.pad, n.tone ?? 'text-[#168a16]')}>
          <span className="w-[21px] shrink-0">
            {n.open && (
              <svg viewBox="0 0 8 8" className="size-2" aria-hidden="true">
                <path d="M8 0v8H0z" fill="#55547a" />
              </svg>
            )}
          </span>
          {n.label}
        </li>
      ))}
    </ul>
    <div className="mt-auto mb-[2px] flex bg-[#f3f4f6] px-px">
      <ScrollButton dir="left" className="h-[21px] w-5" />
      <HThumb className="ml-[2px] w-[113px]" />
      <ScrollButton dir="right" className="ml-auto h-[21px] w-5" />
    </div>
  </aside>
);

const STATUS = ['Wed 7/22/2026 2PM', '1:08:13 (+8:13)', '41:34', 'Afternoons'];
const BOX = 'flex h-[30px] items-center justify-center border border-[#1c1c20] shadow-[1px_1px_0_#85868c] whitespace-pre';
const BOX_WIDTH = ['w-[142px]', 'w-[105px]', 'w-[46px]', 'w-[82px]'];

const StatusStrip = () => (
  <div className="flex h-[41px] items-center gap-[3px] border border-t-2 border-[#b0b1ba] bg-gradient-to-b from-[#e8ecee] to-[#dadfe8] pl-[3px]">
    {STATUS.map((s, i) => <div key={s} className={clsx(BOX, BOX_WIDTH[i])}>{s}</div>)}
    <Icon name="flag" className="mr-1 ml-[7px] size-5" />
    <div className={clsx(BOX, 'w-[75px]')}>2PM  0.00</div>
  </div>
);

const DocumentTabs = () => (
  <div className="flex h-[30px] items-center justify-between pr-[2px] pl-[12px]">
    <div className="flex h-full">
      <button className="relative flex h-full w-[178px] items-center gap-[15px] pl-[19px] font-bold text-black">
        <svg viewBox="0 0 178 30" className="absolute inset-0 h-[30px] w-[178px]" aria-hidden="true">
          <path d="M0 0c8 0 12 28 24 29h130c12-1 14-29 24-29z" fill="#fff" stroke="#c5c7cf" />
        </svg>
        <CloseGlyph className="relative size-[10px]" />
        <span className="relative">Schedule Editor</span>
      </button>
      <button className="relative flex h-full w-[190px] items-center gap-[12px] pl-[7px]">
        <svg viewBox="0 0 190 30" className="absolute inset-0 h-[30px] w-[190px]" aria-hidden="true">
          <path d="M-6 7c6 10 10 22 18 22h150c10 0 14-28 24-28H2" fill="#e8eaee" stroke="#bfc1ca" />
        </svg>
        <CloseGlyph className="relative size-[10px]" />
        <span className="relative">Library Maintenance</span>
      </button>
    </div>
    <WindowButtons />
  </div>
);

/* ---------- history graph ---------- */

const PLAY_HOURS = ['12', '1A', '2A', '3A', '4A', '5A', '6A', '7A', '8A', '9A', '10', '11', '12', '1P', '2P', '3P', '4P', '5P', '6P', '7P', '8P', '9P', '10', '11'];

const PLAYS = [
  { date: '7/22/2026 Wed', time: '02:56 PM', at: 14, turnover: '0d 19:59', tone: 'bg-[#bfbfff]' },
  { date: '7/21/2026 Tue', time: '06:57 PM', at: 18, turnover: '82d 18:57' },
  { date: '4/29/2026 Wed', time: '11:60 PM', at: 23, quarter: 3, turnover: '0d 20:41' },
  { date: '4/29/2026 Wed', time: '03:19 AM', at: 3, quarter: 1, turnover: '0d 21:41' },
  { date: '4/28/2026 Tue', time: '05:38 AM', at: 5, quarter: 2, turnover: '1d 1:19' },
  { date: '4/27/2026 Mon', time: '04:18 AM', at: 4, quarter: 1, turnover: '1d 1:24' },
  { date: '4/26/2026 Sun', time: '02:54 AM', at: 2, quarter: 3, lime: true, turnover: '1d 1:13', tone: 'bg-[#00ff00] text-[#12303a]' },
];

const QUARTERS: Record<number, { d: string; fill: string; base: string; line: string }> = {
  1: { d: 'M10 10h8a8 8 0 0 1-8 8z', fill: '#3f7fbd', base: '#c9daea', line: '#5586b5' },
  2: { d: 'M10 10v8a8 8 0 0 1-8-8z', fill: '#00f000', base: '#a3e8b0', line: '#5fae7d' },
  3: { d: 'M10 10H2a8 8 0 0 1 8-8z', fill: '#fff200', base: '#fbe98e', line: '#c9a35c' },
};

const QuarterClock = ({ quarter, lime }: { quarter: number; lime?: boolean }) => {
  const q = QUARTERS[quarter];
  return (
    <svg viewBox="0 0 20 20" className="mx-auto size-[19px]" aria-hidden="true">
      <circle cx="10" cy="10" r="9" fill={lime ? '#96f018' : q.base} stroke={q.line} strokeWidth="1.500" />
      <path d={q.d} fill={q.fill} stroke={q.line} strokeWidth=".8" />
    </svg>
  );
};

const Star = () => (
  <svg viewBox="0 0 20 20" className="mx-auto size-[19px]" aria-hidden="true">
    <path d="m10 .5 2.600 6.700 7 .4-5.500 4.400 1.900 7-6-4-6 4 1.900-7L.4 7.600l7-.4z" fill="#ffff00" stroke="#d8c83c" strokeWidth=".7" />
  </svg>
);

const HistoryGraph = () => {
  const cell = 'border-r border-b border-[#d9dae4] p-0 whitespace-nowrap';
  return (
    <section className="border-t border-[#b0b1ba] bg-white">
      <div className="flex h-7 items-center justify-between bg-gradient-to-b from-[#e4e6ea] to-white pr-[3px] pl-[3px]">
        <h2>History Graph</h2>
        <WindowButtons />
      </div>
      <div className="flex h-[43px] items-center overflow-hidden border-t-2 border-b-2 border-[#a5a6af] bg-gradient-to-b from-white to-[#ebecf0] pl-1">
        <div className="mr-[7px] h-4 w-[3px] border-l-2 border-dotted border-[#b4b6bf]" />
        <Icon name="colorCells" />
        <button aria-label="View options" className="mr-[6px] ml-1 flex w-[17px] justify-center"><Arrow dir="down" className="size-[7px] text-[#555]" /></button>
        <div className="relative h-[25px] min-w-0 flex-1">
          <select aria-label="History source" className="h-full w-full appearance-none border border-[#9d9ea7] bg-white pl-[3px]">
            <option>Media Set: Torn / Natalie Imbruglia [Songs: 3]</option>
          </select>
          <span className="pointer-events-none absolute inset-y-px right-px flex w-[19px] items-center justify-center border-l border-[#9d9ea7] bg-gradient-to-b from-white to-[#ebecf0]">
            <Arrow dir="down" className="size-2 text-[#555]" />
          </span>
        </div>
        <div className="ml-1 flex h-full items-center">
          <Sep />
          <ToolButton icon="date" />
          <ToolButton icon="gridX" />
          <ToolButton icon="noteBox" active />
          <ToolButton icon="guitar" />
          <ToolButton icon="clapper" />
          <ToolButton icon="pin" />
          <Sep />
          <button aria-label="printer" className="w-[21px] overflow-hidden pl-0.5"><Icon name="printer" /></button>
        </div>
      </div>
      <div className="flex border-l-2 border-[#b0b1ba]">
        <div className="min-w-0 flex-1">
          <div className="h-[186px] overflow-hidden">
            <table className="w-full table-fixed border-separate border-spacing-0 text-center text-[#1c1c22]">
              <thead>
                <tr className="h-[22px]">
                  <th className={clsx(HEAD, 'w-28')}>Play History</th>
                  <th className={clsx(HEAD, 'w-[74px]')} />
                  <th className={clsx(HEAD, 'w-[39px]')}>Cat</th>
                  {PLAY_HOURS.map((h, i) => (
                    <th key={i} className={clsx(HEAD, i < 19 && (i % 5 === 4 ? 'w-[67px]' : 'w-[66px]'))}>{h}</th>
                  ))}
                  <th className={clsx(HEAD, 'w-[72px]')}>Turnover</th>
                </tr>
              </thead>
              <tbody>
                {PLAYS.map((p, r) => (
                  <tr key={r} className={clsx('h-6', p.tone)}>
                    <td className={clsx(cell, r === 0 && 'outline-2 -outline-offset-2 outline-[#f58220] outline-solid')}>{p.date}</td>
                    <td className={clsx(cell, 'pl-1 text-left')}>{p.time}</td>
                    <td className={clsx(cell, 'bg-[#008080] text-[#e6f4f4]')}>90</td>
                    {PLAY_HOURS.map((_, i) => (
                      <td key={i} className={clsx(cell, i === 14 && 'bg-[#bfbfff]')}>
                        {i === p.at && (p.quarter ? <QuarterClock quarter={p.quarter} lime={p.lime} /> : <Star />)}
                      </td>
                    ))}
                    <td className={cell}>{p.turnover}</td>
                  </tr>
                ))}
              </tbody>
            </table>
          </div>
          <div className="flex h-[21px] items-center">
            <ScrollButton dir="left" className="h-5 w-[21px]" />
            <HThumb className="ml-px flex-1" />
            <ScrollButton dir="right" className="ml-[3px] h-5 w-[21px]" />
          </div>
        </div>
        <div className="flex h-[186px] w-[19px] flex-col bg-[#f5f6f8]">
          <ScrollButton dir="up" className="h-[22px] w-[19px]" />
          <VThumb className="h-[51px] w-[19px]" />
          <ScrollButton dir="down" className="mt-auto h-5 w-[19px]" />
        </div>
      </div>
      <div className="h-1 border-y border-[#a5a6af] bg-[#eceef2]" />
    </section>
  );
};

const FOOT = 'flex items-center border-l-2 border-[#b4b6bf] pl-1 shadow-[inset_2px_0_0_white]';

const Footer = () => (
  <footer className="mt-[6px] flex h-9 items-stretch border-t-2 border-b border-[#bcbec6] bg-gradient-to-b from-[#e8ecee] to-[#dadfe8] py-[3px] text-[#22242a]">
    <span className="flex min-w-0 flex-1 items-center pl-px">Ready</span>
    <span className={clsx(FOOT, 'w-[191px]')}>Paul Ziino</span>
    <span className={clsx(FOOT, 'w-[191px]')}>3.4</span>
    <span className={clsx(FOOT, 'w-[236px]')}>PARTY! - MusicMaster CS</span>
    <span className={clsx(FOOT, 'w-[416px] gap-2')}>
      <button aria-label="Play" className="ml-[5px]"><svg viewBox="0 0 19 18" className="h-[18px] w-[19px]"><path d="M0 0v18l19-9z" fill="#3a78b8" /></svg></button>
      <button aria-label="Pause"><svg viewBox="0 0 14 18" className="h-[18px] w-[14px]"><path d="M0 0h5v18H0zM9 0h5v18H9z" fill="#3a78b8" /></svg></button>
      <button aria-label="Stop" className="ml-[3px]"><svg viewBox="0 0 15 16" className="h-4 w-[15px]"><path d="M0 0h15v16H0z" fill="#3a78b8" /></svg></button>
    </span>
  </footer>
);

const Callouts = () => (
  <div className="pointer-events-none absolute inset-0 z-10 font-['Liberation_Sans',sans-serif] text-2xl leading-[27px] text-white">
    <svg viewBox="0 0 1900 1001" className="absolute top-0 left-0 h-[1001px] w-[1900px] drop-shadow-[3px_4px_3px_rgba(0,0,0,0.55)]" aria-hidden="true">
      <path d="M1146 438 1179 432 1174 441 1268 469 1268 479 1171 449 1171 461z" fill="#fe4444" />
      <path d="M1685 719 1665 746 1662 735 1552 794 1540 788 1658 725 1652 719z" fill="#fe4444" />
    </svg>
    <div className="absolute top-[468px] left-[1264px] h-[90px] w-[274px] rounded bg-[#fe4444] pt-[3px] text-center whitespace-nowrap shadow-[3px_4px_5px_rgba(0,0,0,0.5)]">
      Notice Song Rest is the<br />
      same for all items<br />
      within a Media Set
    </div>
    <div className="absolute top-[786px] left-[1248px] flex h-[155px] w-[306px] items-center justify-center rounded bg-[#fe4444] pb-1 text-center shadow-[3px_4px_5px_rgba(0,0,0,0.5)]">
      Via the pulldown you can look at Media Set histories
    </div>
  </div>
);

export default function App() {
  const [query, setQuery] = useState('imbruglia');

  return (
    <div className="relative flex min-h-screen flex-col overflow-hidden bg-[#e1e4ea] font-['Open_Sans',sans-serif] text-[13px] leading-4 text-[#26282e]">
      <div className="flex">
        <LibraryPanel />
        <div className="flex w-[5px] items-center justify-center bg-[#f0f0f0]"><VGrip /></div>
        <main className="flex min-w-0 flex-1 flex-col">
          <div className="flex h-[31px] items-center justify-between border-t-2 border-b-2 border-l border-[#b0b1ba] bg-[#e8ecee] pr-[3px] pl-[3px]">
            <h2>Search</h2>
            <WindowButtons />
          </div>
          <form className="flex h-6" onSubmit={e => e.preventDefault()}>
            <input aria-label="Search text" value={query} onChange={e => setQuery(e.target.value)} className="min-w-0 flex-1 rounded-sm border border-[#c3c4cc] bg-white px-[3px]" />
            <button type="submit" className="ml-0.5 w-[108px] rounded-l-sm border border-r-0 border-[#b9bac2] bg-gradient-to-b from-white to-[#f2f3f6] pl-1 text-black">Search</button>
          </form>
          <div className="flex h-[17px] items-end justify-center bg-[#f0f0f0] pb-px"><HGrip /></div>

          <div className="border border-r-0 border-[#b0b1ba] bg-white pt-[6px] pr-1 pb-[5px] pl-[7px]">
            <div className="flex">
              <section className="min-w-0 flex-1 border-2 border-b-0 border-[#b9bac3] px-[5px] pt-[5px] pb-[6px]">
                <div className="border border-[#b0b1ba]">
                  <ScheduleTools />
                  <ScheduleGrid />
                </div>
                <div className="flex h-[6px] items-center justify-center"><HGrip /></div>
                <div className="border border-[#b0b1ba]">
                  <MediaTools />
                  <div className="border-t-2 border-[#a5a6af]"><MediaGrid /></div>
                </div>
                <div className="flex h-[5px] items-center justify-center"><HGrip /></div>
                <HourBar />
              </section>
              <div className="flex w-[6px] items-center justify-center"><VGrip /></div>
              <TestResults />
            </div>
            <StatusStrip />
          </div>
          <DocumentTabs />
        </main>
      </div>
      <div className="flex h-1 items-center justify-center bg-[#f0f0f0]"><HGrip /></div>
      <HistoryGraph />
      <Footer />
      <Callouts />
    </div>
  );
}
